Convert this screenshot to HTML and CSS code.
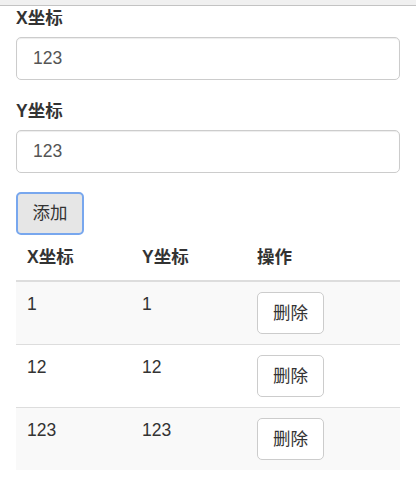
FILE: index.html
```html
<!DOCTYPE html>
<html lang="zh-CN">
<head>
    <meta charset="UTF-8">
    <meta name="viewport" content="width=device-width, initial-scale=1.0">
    <title>坐标列表</title>
    <link rel="stylesheet" href="styles.css">
</head>
<body>
    <div class="topbar"></div>
    <div class="container">
        <div class="form-group">
            <label for="xInput">X坐标</label>
            <input type="text" id="xInput" class="form-control" value="123">
        </div>
        <div class="form-group">
            <label for="yInput">Y坐标</label>
            <input type="text" id="yInput" class="form-control" value="123">
        </div>
        <button class="btn btn-focus">添加</button>

        <table class="table">
            <thead>
                <tr>
                    <th class="col-x">X坐标</th>
                    <th class="col-y">Y坐标</th>
                    <th>操作</th>
                </tr>
            </thead>
            <tbody>
                <tr>
                    <td>1</td>
                    <td>1</td>
                    <td><button class="btn">删除</button></td>
                </tr>
                <tr>
                    <td>12</td>
                    <td>12</td>
                    <td><button class="btn">删除</button></td>
                </tr>
                <tr>
                    <td>123</td>
                    <td>123</td>
                    <td><button class="btn">删除</button></td>
                </tr>
            </tbody>
        </table>
    </div>
</body>
</html>
```

FILE: styles.css
```css
body {
    margin: 0;
    font-family: "Liberation Sans", "Noto Sans CJK SC", sans-serif;
    font-size: 17.5px;
    line-height: 25px;
    color: #333;
    background-color: #fff;
}

.topbar {
    height: 5px;
    background-color: #f0f0f0;
    border-bottom: 1px solid #c3c3c3;
}

.container {
    padding: 0 16px;
}

.form-group {
    margin-bottom: 19px;
}

.form-group label {
    display: block;
    font-weight: bold;
    margin-bottom: 6px;
}

.form-control {
    display: block;
    box-sizing: border-box;
    width: 100%;
    height: 43px;
    padding: 8px 16px;
    font-family: inherit;
    font-size: 17.5px;
    color: #555;
    background-color: #fff;
    border: 1px solid #ccc;
    border-radius: 5px;
    box-shadow: inset 0 1px 1px rgba(0, 0, 0, 0.075);
}

.btn {
    box-sizing: border-box;
    height: 42px;
    padding: 7px 15px;
    margin: 0;
    font-family: inherit;
    font-size: 17.5px;
    line-height: 25px;
    color: #333;
    background-color: #fff;
    border: 1px solid #ccc;
    border-radius: 5px;
    cursor: pointer;
    vertical-align: top;
}

.btn-focus {
    height: 43px;
    padding: 7px 14.5px;
    background-color: #e6e6e6;
    border: 2px solid #78a7ee;
}

.table {
    width: 100%;
    border-collapse: collapse;
    border-spacing: 0;
}

.table th {
    text-align: left;
    font-weight: bold;
    padding: 10px 11px;
    border-bottom: 2px solid #ddd;
}

.table td {
    padding: 10px 11px 10px 11px;
    vertical-align: top;
    border-top: 1px solid #ddd;
    height: 42px;
}

.table tbody tr:first-child td {
    border-top: none;
}

.table tbody tr:nth-child(odd) {
    background-color: #f9f9f9;
}

.col-x,
.col-y {
    width: 93px;
}
```
